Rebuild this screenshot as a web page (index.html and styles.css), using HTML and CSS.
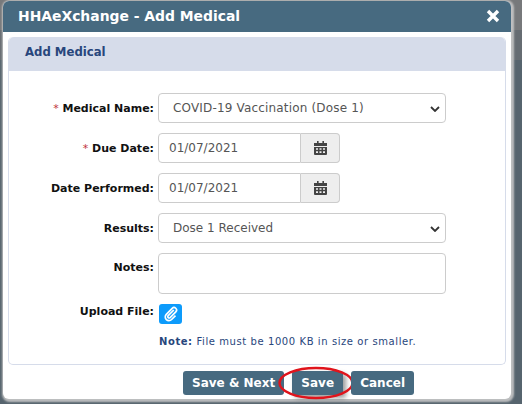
FILE: index.html
```html
<!DOCTYPE html>
<html lang="en">
<head>
    <meta charset="UTF-8">
    <meta name="viewport" content="width=device-width, initial-scale=1.0">
    <title>HHAeXchange - Add Medical</title>
    <link rel="stylesheet" href="styles.css">
</head>
<body>
    <div class="dialog">
        <div class="dialog-title">
            <span>HHAeXchange - Add Medical</span>
            <svg class="close-icon" viewBox="0 0 14 14" width="14" height="14">
                <path d="M2 2 L12 12 M12 2 L2 12" stroke="#fff" stroke-width="3.4" fill="none"/>
            </svg>
        </div>
        <div class="panel">
            <div class="panel-head">Add Medical</div>
            <div class="form">
                <label class="field-label"><span class="req">*</span> Medical Name:</label>
                <div class="control select"><span class="wide-text">COVID-19 Vaccination (Dose 1)</span>
                    <svg class="chevron" viewBox="0 0 10 6" width="10" height="6"><path d="M1 1 L5 5 L9 1" stroke="#333" stroke-width="1.8" fill="none"/></svg>
                </div>

                <label class="field-label"><span class="req">*</span> Due Date:</label>
                <div class="date-group">
                    <div class="control date-input">01/07/2021</div>
                    <div class="date-addon">
                        <svg viewBox="0 0 13 14" width="13" height="14"><path fill="#444" fill-rule="evenodd" d="M3 0h1.600v2H3zM8.400 0H10v2H8.400zM0 2h13v3H0zM0 6h13v7a1 1 0 0 1-1 1H1a1 1 0 0 1-1-1zM2 7.300v1.400h2V7.300zM5.500 7.300v1.400h2V7.300zM9 7.300v1.400h2V7.300zM2 10.300v1.700h2v-1.700zM5.500 10.300v1.700h2v-1.700zM9 10.300v1.700h2v-1.700z"/></svg>
                    </div>
                </div>

                <label class="field-label">Date Performed:</label>
                <div class="date-group">
                    <div class="control date-input">01/07/2021</div>
                    <div class="date-addon">
                        <svg viewBox="0 0 13 14" width="13" height="14"><path fill="#444" fill-rule="evenodd" d="M3 0h1.600v2H3zM8.400 0H10v2H8.400zM0 2h13v3H0zM0 6h13v7a1 1 0 0 1-1 1H1a1 1 0 0 1-1-1zM2 7.300v1.400h2V7.300zM5.500 7.300v1.400h2V7.300zM9 7.300v1.400h2V7.300zM2 10.300v1.700h2v-1.700zM5.500 10.300v1.700h2v-1.700zM9 10.300v1.700h2v-1.700z"/></svg>
                    </div>
                </div>

                <label class="field-label">Results:</label>
                <div class="control select">Dose 1 Received
                    <svg class="chevron" viewBox="0 0 10 6" width="10" height="6"><path d="M1 1 L5 5 L9 1" stroke="#333" stroke-width="1.8" fill="none"/></svg>
                </div>

                <label class="field-label notes-label">Notes:</label>
                <div class="control notes"></div>

                <label class="field-label upload-label">Upload File:</label>
                <div class="upload-cell">
                    <div class="upload-btn">
                        <svg viewBox="0 0 16 16" width="16" height="16"><path d="M10.800 4 L5.200 9.700 a1.300 1.300 0 0 0 1.900 1.900 L12.800 5.800 a2.500 2.500 0 0 0-3.600-3.500 L3.300 8.300 a3.700 3.700 0 0 0 5.300 5.200 L12.500 9.600" stroke="#fff" stroke-width="1.700" fill="none"/></svg>
                    </div>
                    <p class="note"><b>Note:</b> File must be 1000 KB in size or smaller.</p>
                </div>
            </div>
        </div>
        <div class="actions">
            <button class="btn">Save &amp; Next</button>
            <button class="btn save-btn">Save
                <svg class="circle-mark" viewBox="0 0 80 36" width="80" height="36"><ellipse cx="40" cy="18" rx="36.500" ry="15" stroke="#e0141c" stroke-width="2.500" fill="none"/></svg>
            </button>
            <button class="btn">Cancel</button>
        </div>
    </div>
</body>
</html>
```

FILE: styles.css
```css
html, body {
    height: 100%;
}
body {
    margin: 0;
    padding: 1px 0 0 3px;
    box-sizing: border-box;
    overflow: hidden;
    font-family: "DejaVu Sans", Verdana, sans-serif;
    font-size: 11px;
    background: linear-gradient(to bottom, #77797b 0, #77797b 30px, #666c72 30px, #666c72 60px, #56646e 60px);
}
.dialog {
    width: 508px;
    height: 398px;
    background: #fff;
    border-radius: 6px;
    box-shadow: 1px 1px 2px 2px rgba(200, 200, 200, 0.9);
}
.dialog-title {
    display: flex;
    justify-content: space-between;
    align-items: center;
    height: 31px;
    padding: 0 11px 2px 15px;
    box-sizing: border-box;
    background: #476a80;
    border-radius: 6px 6px 0 0;
    color: #fff;
    font-size: 13.900px;
    font-weight: bold;
}
.panel {
    margin: 5px 5px 0;
    height: 327px;
    border: 1px solid #d6dcea;
    border-top: none;
    border-radius: 5px;
}
.panel-head {
    height: 34px;
    line-height: 30px;
    padding-left: 16px;
    background: #d6dcea;
    border-radius: 5px 5px 0 0;
    color: #28467c;
    font-size: 11.700px;
    font-weight: bold;
}
.form {
    display: grid;
    grid-template-columns: 145px 288px;
    column-gap: 4px;
    row-gap: 10px;
    padding: 22px 0 0 0;
}
.field-label {
    height: 30px;
    font-weight: bold;
    color: #111;
    text-align: right;
    line-height: 31px;
}
.req {
    color: #c0303a;
    font-weight: normal;
}
.control {
    height: 30px;
    box-sizing: border-box;
    border: 1px solid #ccc;
    border-radius: 4px;
    color: #555;
    font-size: 12px;
    line-height: 28px;
    background: #fff;
}
.select {
    position: relative;
    padding-left: 14px;
}
.wide-text {
    letter-spacing: 0.170px;
}
.chevron {
    position: absolute;
    right: 5px;
    top: 12px;
}
.date-group {
    display: flex;
    width: 182px;
}
.date-input {
    width: 143px;
    padding-left: 10px;
    border-radius: 4px 0 0 4px;
}
.date-addon {
    display: flex;
    align-items: center;
    justify-content: center;
    width: 39px;
    box-sizing: border-box;
    background: #eee;
    border: 1px solid #ccc;
    border-left: none;
    border-radius: 0 4px 4px 0;
}
.notes {
    height: 41px;
}
.notes-label {
    line-height: 30px;
}
.upload-label {
    height: 15px;
    line-height: 15px;
}
.upload-btn {
    display: flex;
    align-items: center;
    justify-content: center;
    width: 23px;
    height: 20px;
    margin-left: 1px;
    background: #0d9bfb;
    border-radius: 3px;
}
.note {
    margin: 11px 0 0 1px;
    color: #28467c;
    font-size: 10px;
    letter-spacing: 0.580px;
    line-height: 14px;
    white-space: nowrap;
}
.actions {
    display: flex;
    justify-content: flex-end;
    gap: 8px;
    padding: 6px 97px 0 0;
}
.btn {
    position: relative;
    height: 24px;
    padding: 0 9px;
    border: none;
    border-radius: 3px;
    background: #476a80;
    color: #fff;
    font-family: inherit;
    font-size: 12px;
    font-weight: bold;
}
.save-btn {
    width: 51px;
    box-shadow: 3px 3px 5px rgba(0, 0, 0, 0.4);
}
.circle-mark {
    position: absolute;
    left: -16px;
    top: -6px;
}
```
